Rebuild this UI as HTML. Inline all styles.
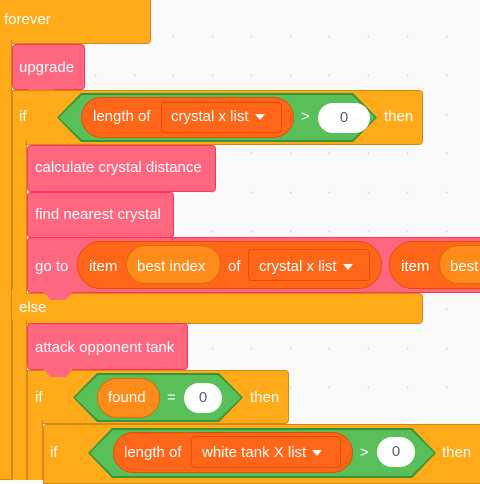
<!DOCTYPE html>
<html><head><meta charset="utf-8"><style>
html,body{margin:0;padding:0}
body{width:480px;height:476px;overflow:hidden;position:relative;background-color:#f9f9f9;
background-image:radial-gradient(circle,#d9d9d9 1px,transparent 1.3px);background-size:39px 39px;background-position:-2px 17px;
font-family:"Liberation Sans",sans-serif;font-size:15px;color:#fff}
div{position:absolute;box-sizing:border-box}
.c{background:#FFAB19;border:1px solid #CF8B17}
.p{background:#FF6680;border:1px solid #FF3355;border-radius:4px}
.l{background:#FF661A;border:1px solid #E64D00;border-radius:24px}
.v{background:#FF8C1A;border:1px solid #DB6E00;border-radius:20px}
.d{background:#FF661A;border:1px solid #E64D00;border-radius:4px}
.w{background:#fff;border-radius:16px;color:#575E75;text-align:center}
.t{white-space:nowrap;line-height:18px}
.gb{background:#389438}
.g{background:#59C059}
.tab{width:30px;height:8px;clip-path:polygon(0 0,100% 0,75% 100%,25% 100%)}
.ar{display:inline-block;width:0;height:0;border-left:5px solid transparent;border-right:5px solid transparent;border-top:6px solid #fff;vertical-align:middle;margin-left:6px}
</style></head><body>

<!-- forever -->
<div class="c" style="left:-2px;top:-4px;width:153px;height:48px;border-radius:0 0 4px 0"></div>
<div class="c" style="left:-2px;top:40px;width:14px;height:440px;border-top:none"></div>
<div class="t" style="left:4px;top:11px">forever</div>

<!-- upgrade -->
<div class="p" style="left:12px;top:44px;width:73px;height:46px"></div>
<div class="p tab" style="left:27px;top:89px;border:none;background:#FF6680"></div>
<div class="t" style="left:19px;top:59px">upgrade</div>

<!-- if top -->
<div class="c" style="left:12px;top:90px;width:411px;height:55px;border-radius:0 4px 4px 4px"></div>
<div class="c" style="left:12px;top:140px;width:15px;height:160px;border-top:none;border-bottom:none"></div>
<div class="t" style="left:19px;top:108px">if</div>
<div class="gb" style="left:57px;top:93px;width:320px;height:49px;clip-path:polygon(24px 0,296px 0,100% 50%,296px 100%,24px 100%,0 50%)"></div>
<div class="g" style="left:59px;top:95px;width:316px;height:45px;clip-path:polygon(23px 0,293px 0,100% 50%,293px 100%,23px 100%,0 50%)"></div>
<div class="l" style="left:81px;top:97px;width:213px;height:41px"></div>
<div class="t" style="left:93px;top:108px">length of</div>
<div class="d" style="left:161px;top:102px;width:121px;height:31px"></div>
<div class="t" style="left:171px;top:108px">crystal x list<span class="ar"></span></div>
<div class="t" style="left:301px;top:108px">&gt;</div>
<div class="w t" style="left:318px;top:103px;width:52px;height:30px;line-height:30px">0</div>
<div class="t" style="left:384px;top:108px">then</div>

<!-- calculate -->
<div class="p" style="left:27px;top:145px;width:189px;height:47px"></div>
<div class="t" style="left:35px;top:159px">calculate crystal distance</div>
<!-- find nearest -->
<div class="p" style="left:27px;top:192px;width:147px;height:46px"></div>
<div class="t" style="left:35px;top:206px">find nearest crystal</div>
<!-- go to -->
<div class="p" style="left:27px;top:237px;width:460px;height:56px;border-radius:4px 0 0 4px"></div>
<div class="tab" style="left:43px;top:292px;background:#FF6680"></div>
<div class="t" style="left:35px;top:258px">go to</div>
<div class="l" style="left:77px;top:241px;width:305px;height:48px;border-radius:26px"></div>
<div class="t" style="left:89px;top:258px">item</div>
<div class="v" style="left:126px;top:245px;width:95px;height:39px"></div>
<div class="t" style="left:137px;top:258px">best index</div>
<div class="t" style="left:228px;top:258px">of</div>
<div class="d" style="left:248px;top:249px;width:122px;height:32px"></div>
<div class="t" style="left:259px;top:258px">crystal x list<span class="ar"></span></div>
<div class="l" style="left:389px;top:241px;width:140px;height:48px;border-radius:26px"></div>
<div class="t" style="left:401px;top:258px">item</div>
<div class="v" style="left:439px;top:245px;width:80px;height:39px"></div>
<div class="t" style="left:450px;top:258px">best</div>

<!-- else -->
<div class="c" style="left:12px;top:293px;width:411px;height:31px;border-radius:0 4px 4px 0;border-left:none"></div>
<div style="left:12px;top:290px;width:14px;height:6px;background:#FFAB19"></div>
<div class="tab" style="left:43px;top:292px;background:#FF6680"></div>
<div class="t" style="left:19px;top:299px">else</div>
<div class="c" style="left:12px;top:320px;width:15px;height:160px;border-top:none;border-bottom:none"></div>

<!-- attack -->
<div class="p" style="left:27px;top:323px;width:161px;height:47px"></div>
<div class="tab" style="left:43px;top:369px;background:#FF6680"></div>
<div class="t" style="left:35px;top:339px">attack opponent tank</div>

<!-- if found -->
<div class="c" style="left:27px;top:370px;width:262px;height:54px;border-radius:0 4px 4px 0"></div>
<div class="tab" style="left:43px;top:369px;background:#FF6680"></div>
<div class="c" style="left:27px;top:420px;width:16px;height:60px;border-top:none;border-bottom:none"></div>
<div class="t" style="left:35px;top:389px">if</div>
<div class="gb" style="left:73px;top:373px;width:170px;height:49px;clip-path:polygon(24px 0,146px 0,100% 50%,146px 100%,24px 100%,0 50%)"></div>
<div class="g" style="left:75px;top:375px;width:166px;height:45px;clip-path:polygon(23px 0,143px 0,100% 50%,143px 100%,23px 100%,0 50%)"></div>
<div class="v" style="left:97px;top:378px;width:63px;height:40px"></div>
<div class="t" style="left:108px;top:389px">found</div>
<div class="t" style="left:167px;top:389px">=</div>
<div class="w t" style="left:184px;top:383px;width:38px;height:30px;line-height:30px">0</div>
<div class="t" style="left:250px;top:389px">then</div>

<!-- inner if -->
<div class="c" style="left:43px;top:424px;width:450px;height:60px;border-radius:4px 0 0 0"></div>
<div class="t" style="left:50px;top:444px">if</div>
<div class="gb" style="left:88px;top:428px;width:348px;height:50px;clip-path:polygon(24px 0,324px 0,100% 50%,324px 100%,24px 100%,0 50%)"></div>
<div class="g" style="left:90px;top:430px;width:344px;height:46px;clip-path:polygon(23px 0,321px 0,100% 50%,321px 100%,23px 100%,0 50%)"></div>
<div class="l" style="left:113px;top:432px;width:240px;height:41px"></div>
<div class="t" style="left:124px;top:444px">length of</div>
<div class="d" style="left:191px;top:436px;width:150px;height:32px"></div>
<div class="t" style="left:202px;top:444px">white tank X list<span class="ar"></span></div>
<div class="t" style="left:360px;top:444px">&gt;</div>
<div class="w t" style="left:377px;top:437px;width:38px;height:30px;line-height:30px">0</div>
<div class="t" style="left:442px;top:444px">then</div>

</body></html>
